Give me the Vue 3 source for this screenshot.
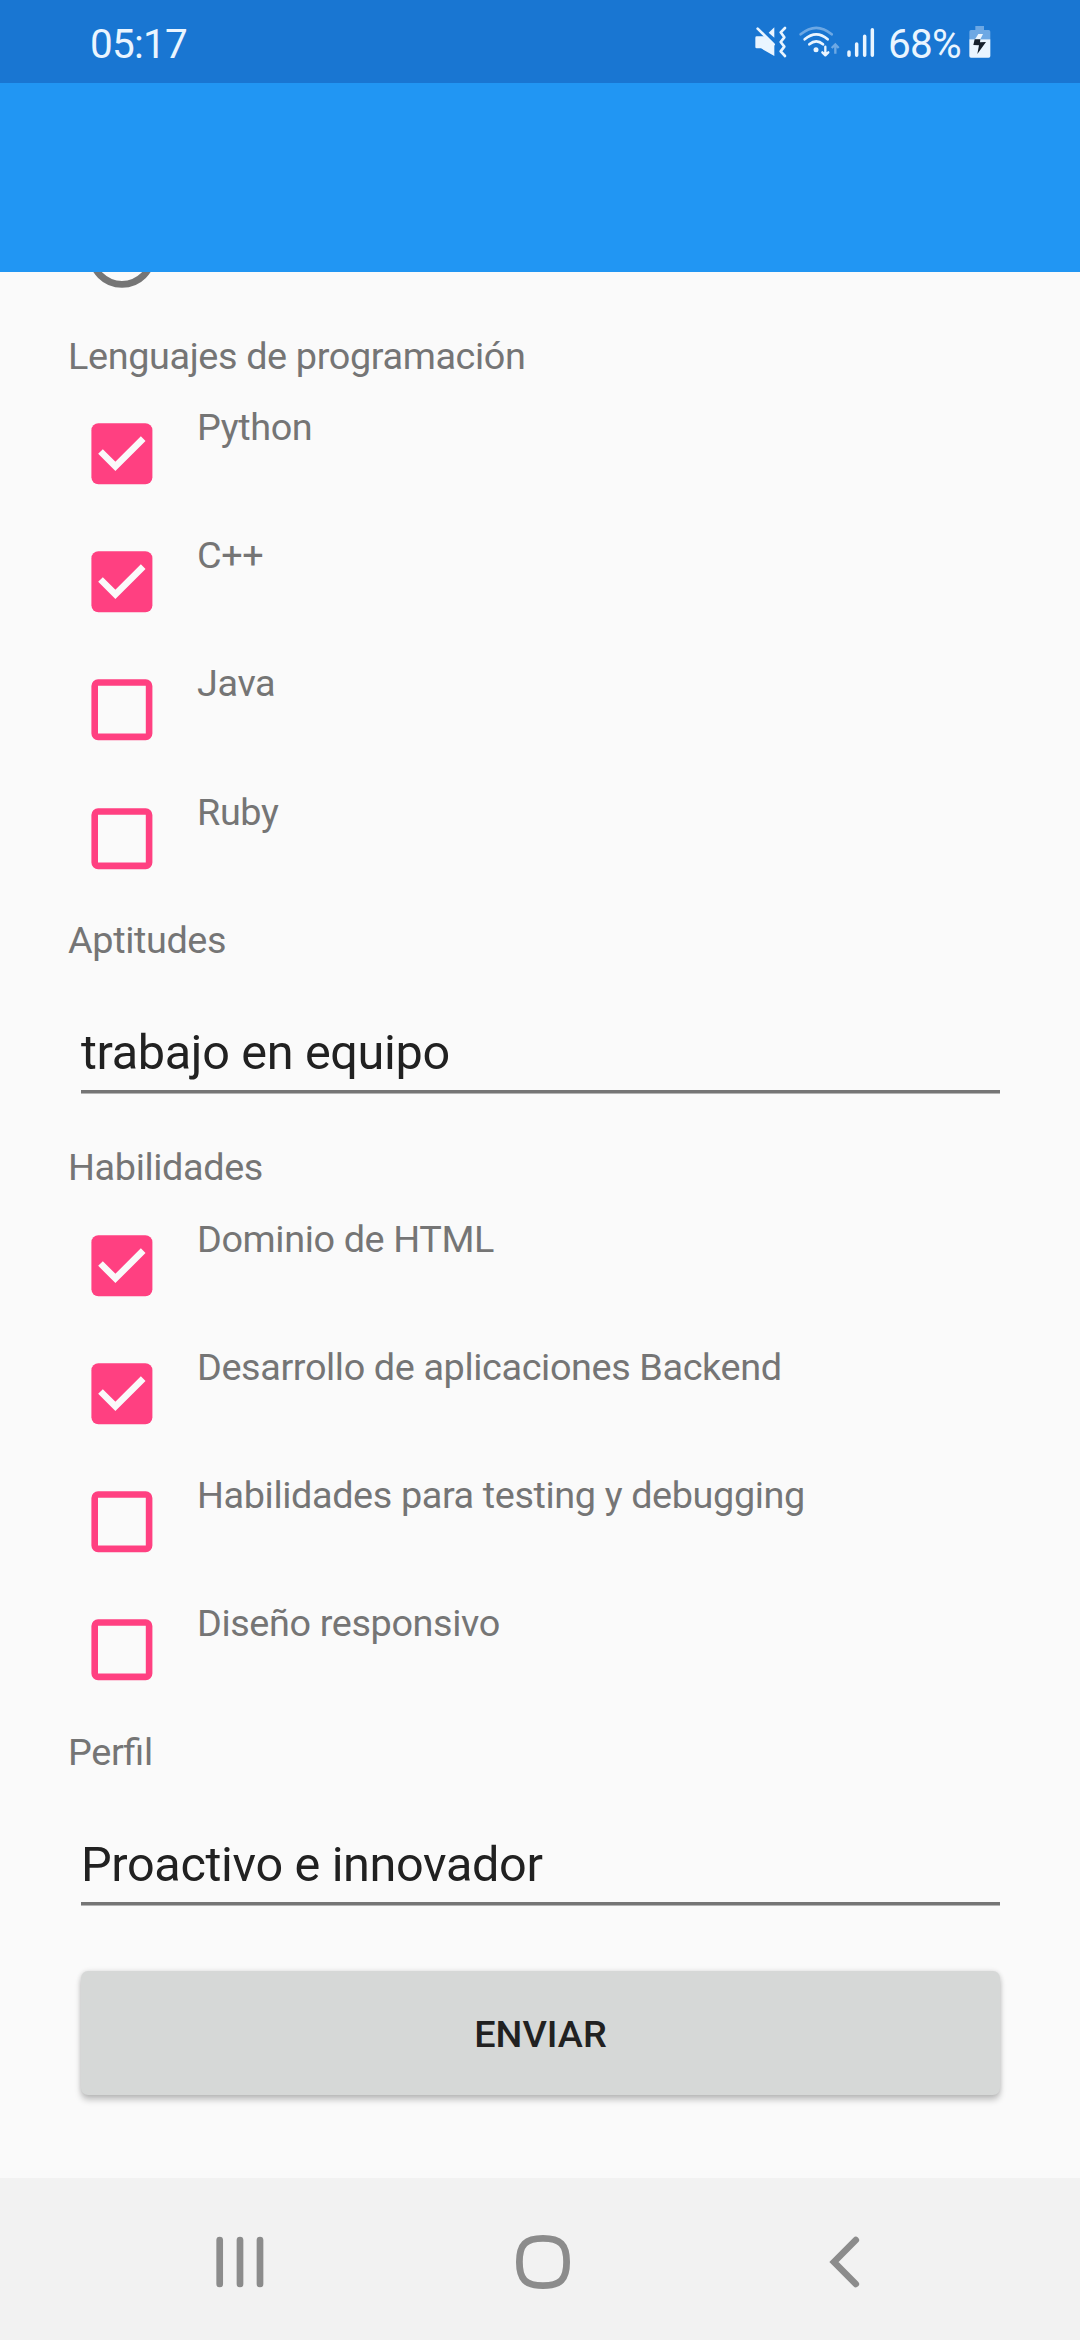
<script setup>
const languages = [
  { label: 'Python', checked: true },
  { label: 'C++', checked: true },
  { label: 'Java', checked: false },
  { label: 'Ruby', checked: false },
]

const skills = [
  { label: 'Dominio de HTML', checked: true },
  { label: 'Desarrollo de aplicaciones Backend', checked: true },
  { label: 'Habilidades para testing y debugging', checked: false },
  { label: 'Diseño responsivo', checked: false },
]

const sections = [
  { title: 'Lenguajes de programación', options: languages },
  { title: 'Aptitudes', value: 'trabajo en equipo' },
  { title: 'Habilidades', options: skills },
  { title: 'Perfil', value: 'Proactivo e innovador' },
]
</script>

<template>
  <div class="screen">
    <header class="status">
      <span class="clock">05:17</span>
      <div class="indicators">
        <!-- muted, vibrating speaker -->
        <svg class="mute" viewBox="0 0 96 96" width="32" height="32">
          <path d="M5 31H28L58 57V90L18 67H5Q1 67 1 63V35Q1 31 5 31Z" fill="currentColor" />
          <path d="M58 4V35L41 20Z" fill="currentColor" />
          <path d="M8 8L56 55" fill="none" stroke="currentColor" stroke-width="8" stroke-linecap="round" />
          <path d="M90 6L77 19L88 34L77 48L88 62L77 76L90 90" fill="none" stroke="currentColor" stroke-width="8" stroke-linejoin="round" stroke-linecap="round" />
        </svg>
        <svg class="wifi" viewBox="0 0 123 96" width="41" height="32">
          <g fill="none" stroke="currentColor" stroke-width="8" stroke-linecap="round">
            <path d="M5 25Q52 -14 98 25" opacity=".4" />
            <path d="M17 40Q52 10 86 40" />
            <path d="M31 55Q52 37 72 55" />
          </g>
          <circle cx="51" cy="71" r="7.5" fill="currentColor" />
          <path d="M79 62V87M70 79L79 88L88 79" fill="none" stroke="currentColor" stroke-width="7" stroke-linecap="round" stroke-linejoin="round" />
          <path d="M109 83V55M98 66L109 55L119 66" fill="none" stroke="currentColor" stroke-width="7" opacity=".4" />
        </svg>
        <svg class="signal" viewBox="0 0 84 96" width="28" height="32">
          <path d="M6 78V88M29 54V88M53 31V88M76 11V88" fill="none" stroke="currentColor" stroke-width="10.5" stroke-linecap="round" />
        </svg>
        <span class="percent">68%</span>
        <svg class="battery" viewBox="0 0 66 98" width="22" height="32.67">
          <path d="M19 0H45V12H59Q64 12 64 17V40H1V17Q1 12 6 12H19Z" fill="currentColor" opacity=".4" />
          <path d="M1 40H64V90Q64 95 59 95H6Q1 95 1 90Z" fill="currentColor" />
          <path d="M28 24H42L34 40H18Z" fill="currentColor" />
          <path d="M17 40H34L33 49L51 48L25 84L30 58L13 57Z" fill="#16202c" />
        </svg>
      </div>
    </header>
    <div class="appbar"></div>

    <main class="form">
      <svg class="radio" viewBox="0 0 68 68" width="68" height="68">
        <circle cx="34" cy="34" r="30.4" fill="none" stroke="#757575" stroke-width="6.75" />
      </svg>

      <section v-for="s in sections" :key="s.title" class="section">
        <h2 class="title">{{ s.title }}</h2>
        <ul v-if="s.options" class="options">
          <li v-for="o in s.options" :key="o.label" class="option">
            <svg class="box" viewBox="0 0 62 62" width="62" height="62">
              <template v-if="o.checked">
                <rect x=".4" y=".2" width="61" height="61" rx="7" fill="#ff4081" />
                <path d="M9.5 28.5L24.4 43.4L52.2 15.7" fill="none" stroke="#fafafa" stroke-width="6.6" />
              </template>
              <rect v-else x="3.7" y="3.5" width="54.4" height="54.4" rx="3.4" fill="none" stroke="#ff4081" stroke-width="6.6" />
            </svg>
            <span class="label">{{ o.label }}</span>
          </li>
        </ul>
        <div v-else class="field">{{ s.value }}</div>
      </section>

      <button class="submit" type="button">ENVIAR</button>
    </main>

    <nav class="nav">
      <svg viewBox="0 0 54 54" width="54" height="54">
        <path d="M6.7 5V49M27 5V49M47 5V49" fill="none" stroke="currentColor" stroke-width="6.7" stroke-linecap="round" />
      </svg>
      <svg viewBox="0 0 54 54" width="54" height="54">
        <path d="M27 3.4C44.5 3.4 50.6 9.5 50.6 27C50.6 44.5 44.5 50.6 27 50.6C9.5 50.6 3.4 44.5 3.4 27C3.4 9.5 9.5 3.4 27 3.4Z" fill="none" stroke="currentColor" stroke-width="6.8" />
      </svg>
      <svg viewBox="0 0 54 54" width="54" height="54">
        <path d="M37.8 5L16 27L37.8 49" fill="none" stroke="currentColor" stroke-width="6.6" stroke-linecap="round" />
      </svg>
    </nav>
  </div>
</template>

<style>
body {
  margin: 0;
}
</style>

<style scoped>
.screen {
  width: 1080px;
  height: 2340px;
  display: flex;
  flex-direction: column;
  overflow: hidden;
  background: #fafafa;
  font-family: Roboto, sans-serif;
  font-feature-settings: "liga" 1;
  color: #757575;
}
.status {
  height: 83px;
  flex: none;
  box-sizing: border-box;
  padding: 0 89px 0 90px;
  display: flex;
  justify-content: space-between;
  background: #1976d2;
  color: #eaf5ff;
  font-size: 40.5px;
  line-height: 88px;
  letter-spacing: -0.8px;
}
.indicators {
  display: flex;
  align-items: flex-start;
}
.indicators svg {
  flex: none;
  margin-top: 26px;
}
.wifi {
  margin-left: 12px;
}
.signal {
  margin-left: 7px;
}
.percent {
  width: 75px;
  margin-left: 13px;
  white-space: nowrap;
}
.indicators .battery {
  margin-left: 6px;
}
.appbar {
  height: 189px;
  flex: none;
  background: #2196f3;
}
.form {
  height: 1906px;
  flex: none;
  overflow: hidden;
  display: flex;
  flex-direction: column;
}
.radio {
  flex: none;
  margin: -52px 0 45.5px 88px;
}
.section {
  flex: none;
  padding: 0 67px;
}
.title {
  margin: 0 0 0 1px;
  height: 71.4px;
  font-size: 37.8px;
  font-weight: 400;
  line-height: 44px;
  letter-spacing: -0.37px;
}
.options {
  margin: 0;
  padding: 0;
  list-style: none;
}
.option {
  height: 128.25px;
  display: flex;
  align-items: flex-start;
}
.box {
  flex: none;
  margin: 18px 0 0 24px;
}
.label {
  margin-left: 44px;
  font-size: 37.8px;
  line-height: 44px;
  letter-spacing: -0.38px;
}
.field {
  height: 70px;
  margin: 34.7px 13px 51.15px 14px;
  font-size: 48.6px;
  line-height: 57px;
  letter-spacing: -0.34px;
  color: #212121;
  background: linear-gradient(#757575 3px, #b4b4b4 3px) 0 66px / 100% 4px no-repeat;
}
.submit {
  flex: none;
  height: 124px;
  margin: 14px 80px 0 81px;
  padding: 2px 0 0;
  border: 0;
  border-radius: 7px;
  background: #d6d8d7;
  box-shadow: 0 5px 6px rgba(0, 0, 0, 0.22), 0 0 5px rgba(0, 0, 0, 0.12);
  font-family: inherit;
  font-size: 37.8px;
  font-weight: 500;
  color: #212121;
}
.nav {
  height: 162px;
  flex: none;
  box-sizing: border-box;
  padding: 57px 208px 0 213px;
  display: flex;
  justify-content: space-between;
  background: #f2f2f2;
  color: #8c8c8c;
}
</style>
